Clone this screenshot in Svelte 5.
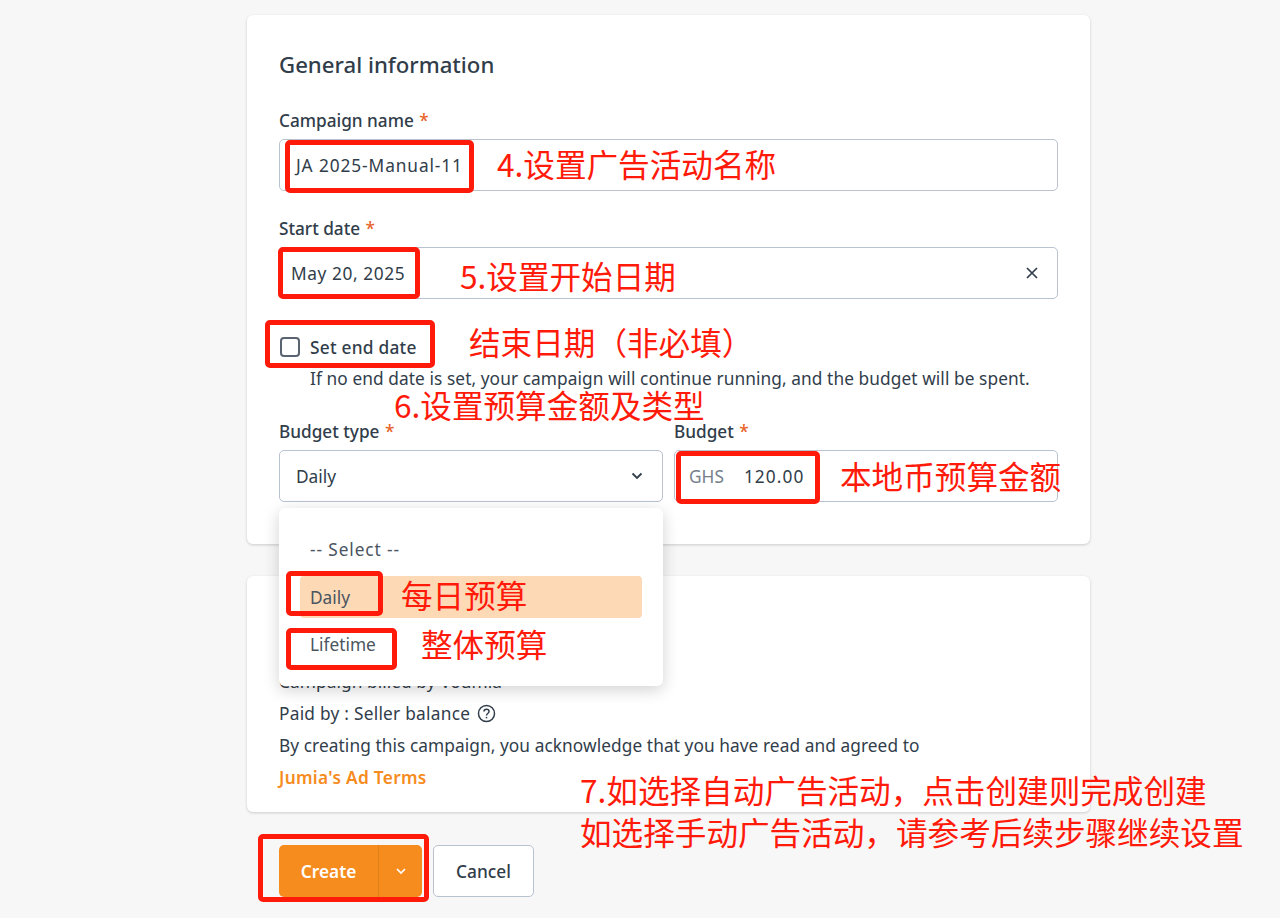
<script>
  const marks = ['m-name', 'm-date', 'm-end', 'm-money', 'm-daily', 'm-life', 'm-create'];
  const notes = [
    { id: 'n4', text: '4.设置广告活动名称' },
    { id: 'n5', text: '5.设置开始日期' },
    { id: 'nend', text: '结束日期（非必填）' },
    { id: 'n6', text: '6.设置预算金额及类型' },
    { id: 'nmoney', text: '本地币预算金额' },
    { id: 'ndaily', text: '每日预算' },
    { id: 'nlife', text: '整体预算' },
    { id: 'n7a', text: '7.如选择自动广告活动，点击创建则完成创建' },
    { id: 'n7b', text: '如选择手动广告活动，请参考后续步骤继续设置' }
  ];
</script>

<main class="page">
  <section class="card general">
    <h2>General information</h2>

    <div class="field">
      <span class="label">Campaign name <i>*</i></span>
      <div class="input"><span class="value-name">JA 2025-Manual-11</span></div>
    </div>

    <div class="field">
      <span class="label">Start date <i>*</i></span>
      <div class="input between tight">
        <span class="value-date">May 20, 2025</span>
        <svg width="14" height="14" viewBox="0 0 14 14" fill="none" stroke="#313d4a" stroke-width="1.7">
          <path d="M2 2l10 10M12 2L2 12" />
        </svg>
      </div>
    </div>

    <label class="check">
      <span class="box"></span>
      <span class="check-text">Set end date</span>
    </label>
    <p class="hint">If no end date is set, your campaign will continue running, and the budget will be spent.</p>

    <div class="row">
      <div class="field">
        <span class="label">Budget type <i>*</i></span>
        <div class="input between select">
          <span>Daily</span>
          <svg width="12" height="8" viewBox="0 0 12 8" fill="none" stroke="#313d4a" stroke-width="1.8">
            <path d="M1.5 1.5L6 6l4.5-4.5" />
          </svg>
        </div>
        <div class="menu">
          <div class="opt placeholder">-- Select --</div>
          <div class="opt active">Daily</div>
          <div class="opt">Lifetime</div>
        </div>
      </div>
      <div class="field">
        <span class="label">Budget <i>*</i></span>
        <div class="input amount"><span class="cur">GHS</span><span class="value-amount">120.00</span></div>
      </div>
    </div>
  </section>

  <section class="card terms">
    <h3>Billing</h3>
    <p>Campaign billed by Voumia</p>
    <p class="paid">
      Paid by : Seller balance
      <svg width="19" height="19" viewBox="0 0 18 18" fill="none" stroke="#313d4a" stroke-width="1.4">
        <circle cx="9" cy="9" r="7.6" />
        <path d="M6.6 7.2c0-1.4 1-2.2 2.4-2.2s2.4.8 2.4 2.1c0 1.9-2.4 1.9-2.4 3.7" />
        <path d="M9 12.2v1.4" />
      </svg>
    </p>
    <p>By creating this campaign, you acknowledge that you have read and agreed to</p>
    <p class="link">Jumia's Ad Terms</p>
  </section>

  <div class="actions">
    <div class="split">
      <span class="create">Create</span>
      <span class="caret">
        <svg width="10" height="7" viewBox="0 0 10 7" fill="none" stroke="#fff" stroke-width="1.7">
          <path d="M1 1l4 4 4-4" />
        </svg>
      </span>
    </div>
    <span class="cancel">Cancel</span>
  </div>

  {#each marks as m}
    <div class="mark {m}"></div>
  {/each}
  {#each notes as n}
    <div class="note {n.id}">{n.text}</div>
  {/each}
</main>

<style>
  :global(body) {
    margin: 0;
    background: #f7f7f7;
  }

  .page {
    position: relative;
    box-sizing: border-box;
    width: 1280px;
    height: 918px;
    padding: 15px 190px 0 247px;
    overflow: hidden;
    font-family: "Noto Sans", "Open Sans", sans-serif;
    font-size: 17.3px;
    color: #313d4a;
  }

  .card {
    background: #fff;
    border-radius: 6px;
    box-shadow: 0 1px 3px rgba(0, 0, 0, 0.18);
    padding: 0 32px;
  }

  .general {
    height: 529px;
    box-sizing: border-box;
    padding-top: 36px;
    display: flex;
    flex-direction: column;
  }

  h2 {
    margin: 0 0 31px;
    font-size: 22.2px;
    line-height: 28px;
    font-weight: 500;
  }

  .field {
    position: relative;
    display: flex;
    flex-direction: column;
    margin-bottom: 27px;
  }

  .label {
    font-size: 17.2px;
    line-height: 22px;
    font-weight: 500;
    margin-bottom: 7px;
  }

  .label i {
    color: #e8632a;
    font-style: normal;
    margin-left: 1px;
  }

  .input {
    box-sizing: border-box;
    height: 52px;
    display: flex;
    align-items: center;
    padding: 0 16px;
    border: 1px solid #b9c2cf;
    border-radius: 5px;
    background: #fff;
  }

  .between {
    justify-content: space-between;
  }

  .tight {
    padding: 0 18px 0 11px;
  }

  .select {
    padding-right: 19px;
  }

  .value-name {
    letter-spacing: 0.9px;
  }

  .value-date {
    letter-spacing: 0.6px;
  }

  .value-amount {
    letter-spacing: 1.1px;
  }

  .check {
    display: flex;
    align-items: center;
    gap: 10px;
    margin: 9px 0 0 1px;
    height: 24px;
    font-weight: 500;
  }

  .check-text {
    letter-spacing: 0.25px;
  }

  .box {
    box-sizing: border-box;
    width: 20px;
    height: 20px;
    border: 2px solid #5a6470;
    border-radius: 4px;
  }

  .hint {
    margin: 8px 0 0 31px;
    line-height: 24px;
    letter-spacing: 0.08px;
  }

  .row {
    display: grid;
    grid-template-columns: 384px 384px;
    gap: 11px;
    margin-top: 30px;
  }

  .amount {
    padding: 0 14px 0 14px;
    gap: 20px;
  }

  .cur {
    color: #75808c;
  }

  .menu {
    position: absolute;
    z-index: 2;
    top: 87px;
    left: 0;
    right: 0;
    height: 178px;
    background: #fff;
    border-radius: 6px;
    box-shadow: 0 4px 16px rgba(0, 0, 0, 0.18);
    display: flex;
    flex-direction: column;
    box-sizing: border-box;
    padding: 20px 21px 0;
  }

  .opt {
    height: 42px;
    margin-bottom: 6px;
    display: flex;
    align-items: center;
    padding-left: 10px;
    color: #4a5560;
  }

  .placeholder {
    letter-spacing: 0.9px;
  }

  .active {
    background: #fdd9b6;
    border-radius: 4px;
    margin-bottom: 5px;
  }

  .terms {
    margin-top: 32px;
    height: 236px;
    box-sizing: border-box;
    padding-top: 34px;
  }

  h3 {
    margin: 0 0 32px;
    font-size: 22px;
    line-height: 28px;
    font-weight: 500;
  }

  .terms p {
    margin: 0 0 7px;
    line-height: 24.5px;
    letter-spacing: 0.07px;
  }

  .terms .paid {
    display: flex;
    align-items: center;
    gap: 7px;
    letter-spacing: 0.25px;
    margin-bottom: 8px;
  }

  .terms .link {
    color: #f68b1e;
    font-weight: 600;
    letter-spacing: 0.3px;
  }

  .actions {
    display: flex;
    gap: 11px;
    margin: 33px 0 0 32px;
  }

  .split {
    display: flex;
    height: 52px;
    border-radius: 5px;
    overflow: hidden;
    background: #f68b1e;
    color: #fff;
    font-weight: 600;
  }

  .create {
    width: 99px;
    display: flex;
    align-items: center;
    justify-content: center;
    border-right: 1px solid #e07e18;
  }

  .caret {
    width: 43px;
    display: flex;
    align-items: center;
    justify-content: center;
  }

  .cancel {
    box-sizing: border-box;
    width: 101px;
    height: 52px;
    display: flex;
    align-items: center;
    justify-content: center;
    border: 1px solid #b9c2cf;
    border-radius: 5px;
    background: #fff;
    font-weight: 500;
  }

  .mark {
    position: absolute;
    z-index: 3;
    box-sizing: border-box;
    border: 5px solid #ff1a0a;
    border-radius: 5px;
  }

  .m-name { left: 285px; top: 140px; width: 189px; height: 53px; }
  .m-date { left: 278px; top: 247px; width: 142px; height: 52px; }
  .m-end { left: 265px; top: 320px; width: 170px; height: 48px; }
  .m-money { left: 676px; top: 451px; width: 144px; height: 53px; }
  .m-daily { left: 286px; top: 571px; width: 97px; height: 45px; }
  .m-life { left: 286px; top: 628px; width: 111px; height: 42px; }
  .m-create { left: 258px; top: 834px; width: 171px; height: 68px; }

  .note {
    position: absolute;
    z-index: 4;
    font-family: "Noto Sans CJK SC", sans-serif;
    font-size: 31.6px;
    line-height: 40px;
    color: #ff1a0a;
    white-space: nowrap;
  }

  .n4 { left: 497px; top: 143px; }
  .n5 { left: 460px; top: 255px; }
  .nend { left: 469px; top: 321px; }
  .n6 { left: 394px; top: 384px; }
  .nmoney { left: 840px; top: 455px; }
  .ndaily { left: 401px; top: 574px; }
  .nlife { left: 421px; top: 623px; }
  .n7a { left: 580px; top: 769px; }
  .n7b { left: 580px; top: 811px; }
</style>
